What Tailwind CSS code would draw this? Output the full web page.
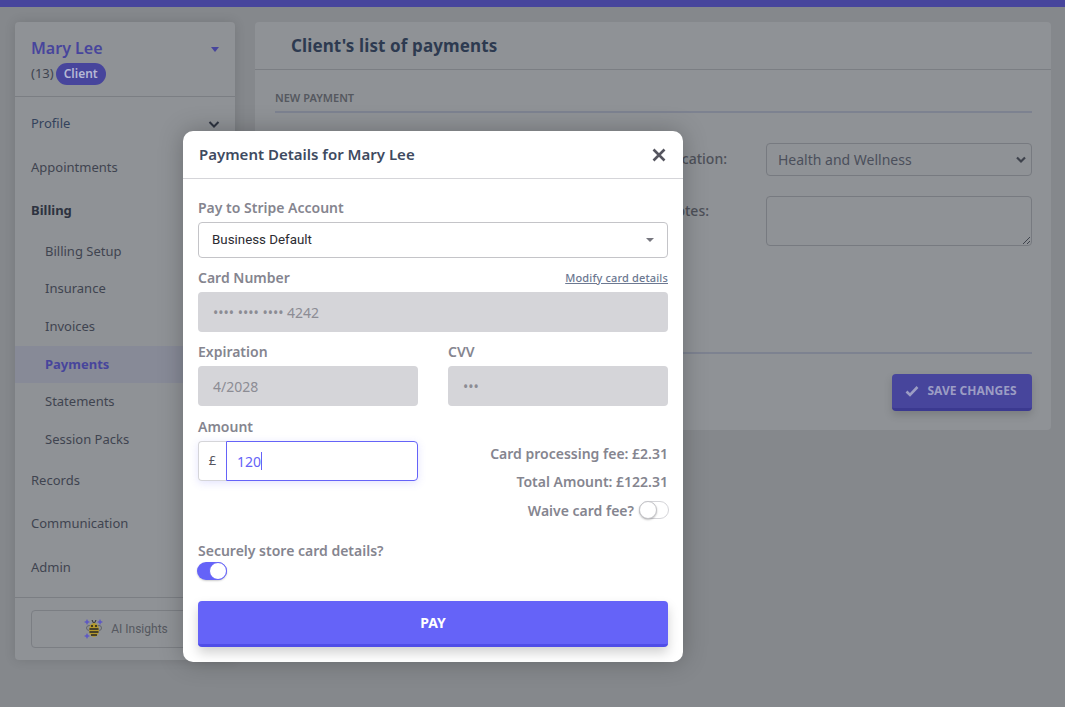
<!DOCTYPE html>
<html lang="en"><head><meta charset="utf-8"><title>Payments</title>
<script src="https://cdn.jsdelivr.net/npm/@tailwindcss/browser@4"></script></head>
<body class="m-0">
<div class="relative w-[1065px] h-[707px] overflow-hidden bg-[#85888c] font-['Noto_Sans','Open_Sans',sans-serif] text-[#3f4450]">
  <div class="h-[7px] bg-[#47459c]"></div>
  <div class="flex items-start gap-5 pl-[15px] pt-[15px]">
    <aside class="w-[220px] h-[638px] shrink-0 flex flex-col rounded-[4px] bg-[#8f9296] shadow-[0_0_12px_rgba(0,0,0,0.12)]">
      <div class="h-[75px] shrink-0 border-b border-[#7b7e83] pl-4 pr-4 pt-[14px]">
        <div class="flex items-center justify-between">
          <span class="text-[16px] leading-[24px] font-semibold text-[#47459c]">Mary Lee</span>
          <span class="mt-[3px] w-0 h-0 border-x-[4px] border-x-transparent border-t-[5px] border-t-[#47459c]"></span>
        </div>
        <div class="flex items-center gap-[2px] text-[13px] mt-[3px]"><span>(13)</span><span class="w-[50px] h-[22px] text-center rounded-full bg-[#47459c] text-[12px] text-[#b6b8d4] font-semibold leading-[21px]">Client</span></div>
      </div>
      <nav class="flex-1 flex flex-col text-[13px] pt-[5px]">
        <div class="h-[44px] flex items-center justify-between pl-4 pr-[15px] text-[#33425c]">Profile<svg width="12" height="12" viewBox="0 0 12 12" fill="none" stroke="#2d3340" stroke-width="2"><path d="M1.500 4l4.500 4.500L10.500 4"/></svg></div>
        <div class="h-[44px] flex items-center pl-4">Appointments</div>
        <div class="h-[42px] flex items-center pl-4 font-bold text-[#2d3340]">Billing</div>
        <div class="h-[39px] flex items-center pl-[30px]">Billing Setup</div>
        <div class="h-[36px] flex items-center pl-[30px]">Insurance</div>
        <div class="h-[39px] flex items-center pl-[30px]">Invoices</div>
        <div class="h-[37px] flex items-center pl-[30px] font-bold text-[#47459c] bg-[#878a97]">Payments</div>
        <div class="h-[38px] flex items-center pl-[30px]">Statements</div>
        <div class="h-[38px] flex items-center pl-[30px]">Session Packs</div>
        <div class="h-[43px] flex items-center pl-4">Records</div>
        <div class="h-[44px] flex items-center pl-4">Communication</div>
        <div class="h-[43px] flex items-center pl-4">Admin</div>
      </nav>
      <div class="h-[63px] shrink-0 border-t border-[#7b7e83] px-4 pt-3">
        <div class="h-[38px] rounded-[4px] border border-[#7b7e83] flex items-center justify-center gap-[7px] pl-[2px] font-['Roboto',sans-serif] text-[12px] text-[#55585f]">
          <svg width="20" height="22" viewBox="0 0 20 22"><g fill="#5e59c4"><path d="M3 1l1 2 2 1-2 1-1 2-1-2-2-1 2-1zM16 1l1 2 2 1-2 1-1 2-1-2-2-1 2-1zM3 15l1 2 2 1-2 1-1 2-1-2-2-1 2-1z"/></g><ellipse cx="5.500" cy="10" rx="3" ry="2.500" fill="none" stroke="#62656b"/><ellipse cx="15" cy="10" rx="2.500" ry="2.500" fill="none" stroke="#62656b"/><path d="M8 2l1.500 3M12 2l-1.500 3" stroke="#2a2a2a" fill="none"/><ellipse cx="10" cy="12" rx="5" ry="7" fill="#b3982b"/><path d="M5.500 11h9M5.500 14h9M7 17h6" stroke="#26262a" stroke-width="1.600"/><circle cx="8" cy="8" r="1" fill="#1e1e22"/><circle cx="12" cy="8" r="1" fill="#1e1e22"/></svg>
          AI Insights
        </div>
      </div>
    </aside>
    <main class="w-[796px] h-[408px] shrink-0 rounded-[4px] bg-[#8f9296]">
      <div class="h-[48px] border-b border-[#7b7e83] pl-9 pt-[12px] text-[17px] tracking-[0.12px] leading-[24px] font-bold text-[#2d3a50]">Client's list of payments</div>
      <div class="pl-5 pr-[19px]">
        <div class="h-[43px] pt-[19px] border-b-2 border-[#7d8290] text-[11px] leading-[18px] font-semibold text-[#55585f]">NEW PAYMENT</div>
        <div class="mt-[30px] flex items-center gap-[39px] justify-end">
          <span class="mb-[2px] text-[14px] font-medium text-[#4d5059]">Location:</span>
          <div class="w-[266px] h-[33px] rounded-[4px] border border-[#777a80] flex items-center justify-between pl-[11px] pr-[5px] text-[14px] text-[#4b4f5b]">Health and Wellness<svg width="10" height="8" viewBox="0 0 10 8" fill="none" stroke="#3e424c" stroke-width="2.200"><path d="M1 1.500l4 4 4-4"/></svg></div>
        </div>
        <div class="mt-5 flex items-start gap-[57px] justify-end">
          <span class="text-[14px] font-medium text-[#4d5059] mt-[4px]">Payment notes:</span>
          <div class="relative w-[266px] h-[50px] rounded-[4px] border border-[#777a80]"><svg class="absolute right-0 bottom-0" width="9" height="9" viewBox="0 0 9 9" stroke="#3e424c" fill="none"><path d="M1 8l7-7M5 8l3-3"/></svg></div>
        </div>
        <div class="mt-[106px] border-t-2 border-[#7d8290]"></div>
        <div class="mt-[20px] flex justify-end">
          <div class="w-[140px] h-[37px] rounded-[4px] bg-[#47459c] border-b-[3px] border-[#3b3990] shadow-[0_4px_8px_rgba(0,0,0,0.15)] flex items-center justify-center gap-2 pr-[2px] text-[12px] font-bold text-[#9c9dc4]">
            <svg width="14" height="12" viewBox="0 0 14 12" fill="none" stroke="#9c9dc4" stroke-width="2.600"><path d="M1.500 6.500L5 10l7.500-8"/></svg>SAVE CHANGES
          </div>
        </div>
      </div>
    </main>
  </div>

  <section class="absolute left-[183px] top-[131px] w-[500px] h-[531px] rounded-[10px] bg-white shadow-[0_0_24px_rgba(0,0,0,0.25)] text-[#85858f]">
    <header class="h-[48px] border-b border-[#d5d5d9] flex items-center justify-between pl-4 pr-[17px]">
      <span class="text-[15px] font-semibold text-[#3e4a60]">Payment Details for Mary Lee</span>
      <svg width="14" height="14" viewBox="0 0 14 14" fill="none" stroke="#55555f" stroke-width="2.600"><path d="M1.500 1.500l11 11M12.500 1.500l-11 11"/></svg>
    </header>
    <div class="px-[15px]">
      <div class="mt-[19px] text-[14px] leading-[20px] font-semibold">Pay to Stripe Account</div>
      <div class="mt-[4px] h-[36px] rounded-[4px] border border-[#c4c4c8] flex items-center justify-between pl-[13px] pr-[13px] font-['Roboto',sans-serif] text-[13.33px] text-[#2c2c32]">Business Default<span class="-ml-2 w-0 h-0 border-x-[4px] border-x-transparent border-t-[4px] border-t-[#77777f]"></span></div>
      <div class="mt-[9px] flex items-center justify-between h-[20px]"><span class="text-[14px] font-semibold">Card Number</span><span class="mt-[2px] text-[11px] tracking-[0.15px] font-medium text-[#6c7891] underline">Modify card details</span></div>
      <div class="mt-[5px] h-[40px] rounded-[4px] bg-[#d5d5d9] flex items-center pl-[15px] text-[14px] text-[#8c8c94]">•••• •••• •••• 4242</div>
      <div class="mt-[9px] flex gap-[30px]">
        <div class="w-[220px]"><div class="h-[20px] text-[14px] font-semibold">Expiration</div><div class="mt-[5px] h-[40px] rounded-[4px] bg-[#d5d5d9] flex items-center pl-[15px] text-[14px] text-[#8c8c94]">4/2028</div></div>
        <div class="w-[220px]"><div class="h-[20px] text-[14px] font-semibold">CVV</div><div class="mt-[5px] h-[40px] rounded-[4px] bg-[#d5d5d9] flex items-center pl-[15px] text-[14px] text-[#8c8c94]">•••</div></div>
      </div>
      <div class="mt-[10px] flex gap-[30px]">
        <div class="w-[220px]">
          <div class="h-[20px] text-[14px] font-semibold">Amount</div>
          <div class="mt-[5px] flex h-[40px] rounded-[4px] shadow-[0_2px_8px_rgba(101,99,248,0.18)]">
            <span class="w-[28px] rounded-l-[4px] border border-r-0 border-[#d5d5d9] flex items-center justify-center text-[13px] text-[#55555f]">£</span>
            <span class="flex-1 rounded-r-[4px] border border-[#6563f8] flex items-center pl-[10px] text-[14px] text-[#6563f8]">120<span class="w-px h-[18px] bg-[#6563f8]"></span></span>
          </div>
        </div>
        <div class="w-[220px] flex flex-col items-end pt-[18px] text-[14px] font-semibold">
          <div class="h-[20px] leading-[20px] mt-[10px]">Card processing fee: £2.31</div>
          <div class="h-[20px] leading-[20px] mt-[8px]">Total Amount: £122.31</div>
          <div class="h-[20px] mt-[8px] flex items-center gap-[5px] -mr-[1px]">Waive card fee?<span class="relative w-[30px] h-[18px] rounded-full border border-[#d5d5d9] bg-white"><span class="absolute -left-px -top-px w-[18px] h-[18px] rounded-full bg-white border border-[#c4c4c8] shadow-[0_1px_2px_rgba(0,0,0,0.25)]"></span></span></div>
        </div>
      </div>
      <div class="mt-[20px] h-[20px] text-[14px] font-semibold">Securely store card details?</div>
      <div class="relative mt-[2px] -ml-px w-[30px] h-[18px] rounded-full bg-[#6563f8] shadow-[0_1px_2px_rgba(0,0,0,0.2)]"><span class="absolute right-0 top-0 w-[18px] h-[18px] rounded-full bg-white border border-[#6563f8]"></span></div>
      <div class="mt-[21px] h-[46px] rounded-[4px] bg-[#6563f8] border-b-[3px] border-[#4f4de8] shadow-[0_6px_12px_rgba(0,0,0,0.18)] flex items-center justify-center text-[14px] font-bold text-white">PAY</div>
    </div>
  </section>
</div>
</body></html>
